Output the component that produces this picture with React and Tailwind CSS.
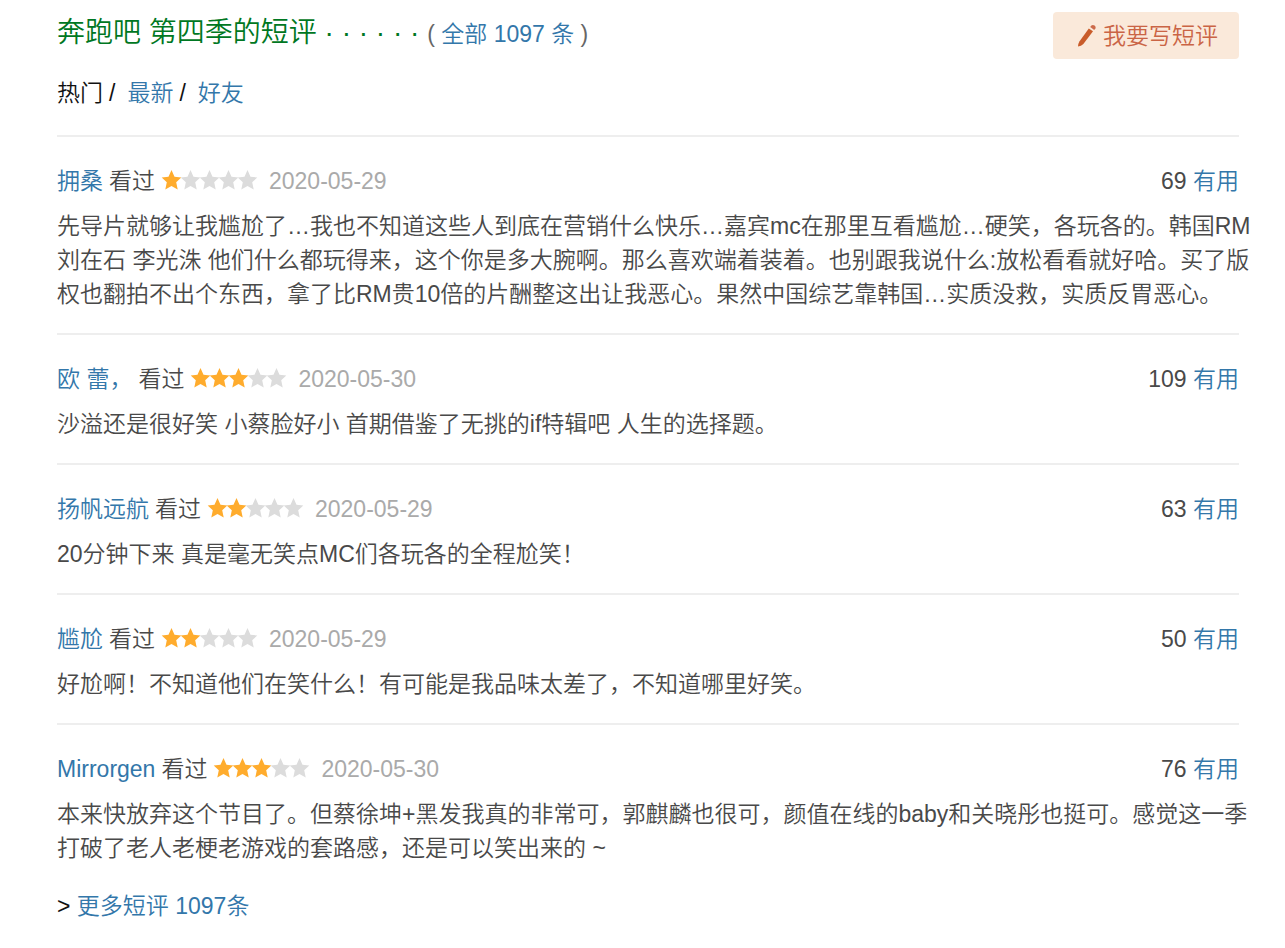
import React from "react";

const comments = [
  {
    id: 1,
    user: "拥桑",
    rating: 1,
    date: "2020-05-29",
    votes: 69,
    text: "先导片就够让我尴尬了…我也不知道这些人到底在营销什么快乐…嘉宾mc在那里互看尴尬…硬笑，各玩各的。韩国RM刘在石 李光洙 他们什么都玩得来，这个你是多大腕啊。那么喜欢端着装着。也别跟我说什么:放松看看就好哈。买了版权也翻拍不出个东西，拿了比RM贵10倍的片酬整这出让我恶心。果然中国综艺靠韩国…实质没救，实质反胃恶心。",
  },
  {
    id: 2,
    user: "欧 蕾，",
    rating: 3,
    date: "2020-05-30",
    votes: 109,
    text: "沙溢还是很好笑 小蔡脸好小 首期借鉴了无挑的if特辑吧 人生的选择题。",
  },
  {
    id: 3,
    user: "扬帆远航",
    rating: 2,
    date: "2020-05-29",
    votes: 63,
    text: "20分钟下来 真是毫无笑点MC们各玩各的全程尬笑！",
  },
  {
    id: 4,
    user: "尴尬",
    rating: 2,
    date: "2020-05-29",
    votes: 50,
    text: "好尬啊！不知道他们在笑什么！有可能是我品味太差了，不知道哪里好笑。",
  },
  {
    id: 5,
    user: "Mirrorgen",
    rating: 3,
    date: "2020-05-30",
    votes: 76,
    text: "本来快放弃这个节目了。但蔡徐坤+黑发我真的非常可，郭麒麟也很可，颜值在线的baby和关晓彤也挺可。感觉这一季打破了老人老梗老游戏的套路感，还是可以笑出来的 ~",
  },
];

const Pencil = () => (
  <svg viewBox="0 0 20 24" className="h-6 w-5" aria-hidden="true">
    <path
      fill="#c95c2a"
      d="M1 22.6 Q0.6 20.6 2.4 17.4 L11.8 4.4 L16 7.2 L6.4 20 Q4.2 22.4 1 22.6 Z"
    />
    <path
      fill="#cc6a4a"
      d="M13.2 3 L14.4 1.5 Q15.8 0.4 17.6 1.6 Q19.4 3 18.4 4.6 L17.2 6 Z"
    />
  </svg>
);

const Stars = ({ rating }) => (
  <span className="ml-[7px] flex pb-0.5" role="img" aria-label={rating + " / 5"}>
    {[1, 2, 3, 4, 5].map((n) => (
      <svg
        key={n}
        viewBox="0 0 19 20"
        className={
          n <= rating
            ? "h-5 w-[19px] overflow-visible fill-[#ffac2d]"
            : "h-5 w-[19px] overflow-visible fill-[#dcdcdc]"
        }
      >
        <path d="M9.5 0 L12.5 6.8 L19.3 7.5 L14.2 12.3 L15.7 19.4 L9.5 15.9 L3.3 19.4 L4.8 12.3 L-0.3 7.5 L6.5 6.8 Z" />
      </svg>
    ))}
  </span>
);

const Comment = ({ comment }) => (
  <li className="border-t-2 border-[#eeeeee] pt-[27px] pb-[22px] last:pb-0">
    <div className="flex items-center justify-between">
      <div className="flex items-center">
        <a href="#user" className="text-[#3377aa]">
          {comment.user}
        </a>
        <span className="ml-[6px]">看过</span>
        <Stars rating={comment.rating} />
        <span className="ml-3 text-[#aaaaaa]">{comment.date}</span>
      </div>
      <div>
        {comment.votes}{" "}
        <button type="button" className="cursor-pointer text-[#3377aa]">
          有用
        </button>
      </div>
    </div>
    <p className="-mr-4 mt-[11px]">{comment.text}</p>
  </li>
);

const App = () => {
  return (
    <main
      lang="zh-CN"
      className="bg-white pt-3 pr-[46px] pb-6 pl-[57px] font-['Liberation_Sans','Noto_Sans_CJK_SC',sans-serif] text-[23px] leading-[34px] font-[350] text-[#494949]"
    >
      <header className="flex items-start justify-between">
        <h2 className="pt-1 text-[28px] leading-[34px] font-[350] text-[#007722]">
          奔跑吧 第四季的短评 · · · · · ·{" "}
          <span className="text-[23px] text-[#666666]">
            ({" "}
            <a href="#all" className="text-[#3377aa]">
              全部 1097 条
            </a>{" "}
            )
          </span>
        </h2>
        <button
          type="button"
          className="flex h-[47px] cursor-pointer items-center gap-[6px] rounded bg-[#fae9da] pr-[21px] pl-6 text-[#ca6445]"
        >
          <Pencil />
          我要写短评
        </button>
      </header>

      <nav className="mt-[17px] mb-[25px] flex text-[#111111]">
        <span>热门</span>
        <span className="ml-[6px] mr-3">/</span>
        <a href="#new" className="text-[#3377aa]">
          最新
        </a>
        <span className="ml-[6px] mr-3">/</span>
        <a href="#friends" className="text-[#3377aa]">
          好友
        </a>
      </nav>

      <ul>
        {comments.map((comment) => (
          <Comment key={comment.id} comment={comment} />
        ))}
      </ul>

      <div className="mt-6 text-[#111111]">
        &gt;{" "}
        <a href="#more" className="text-[#3377aa]">
          更多短评 1097条
        </a>
      </div>
    </main>
  );
};

export default App;
